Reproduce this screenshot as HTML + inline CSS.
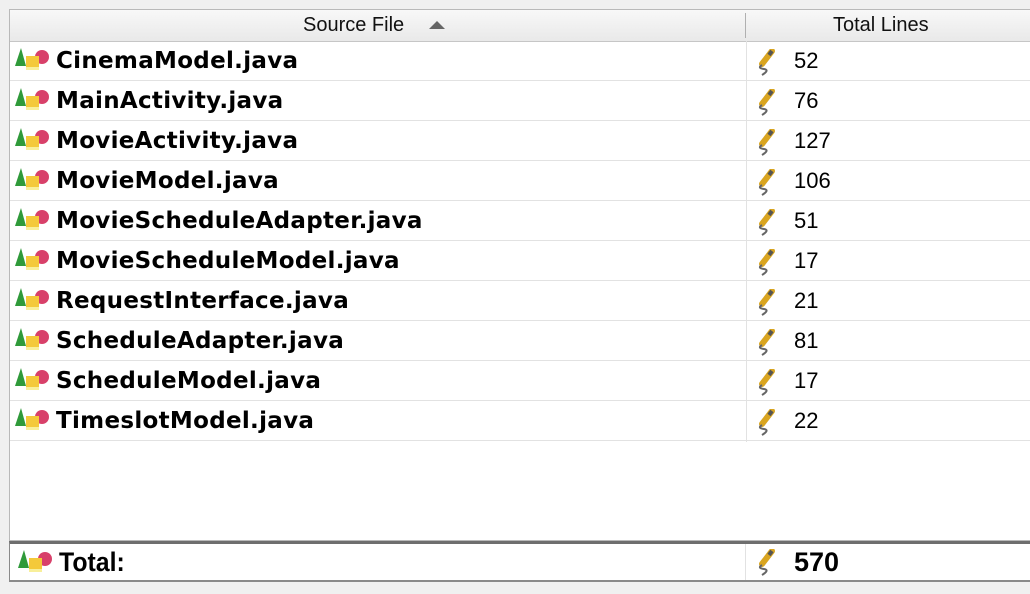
<!DOCTYPE html>
<html><head><style>
body{margin:0;width:1030px;height:594px;background:#f0f0f0;position:relative;overflow:hidden;font-family:"Liberation Sans",sans-serif}
.tbl{position:absolute;left:9px;top:9px;width:1030px;height:532px;background:#fff;border:1px solid #b9b9b9;box-sizing:border-box}
.hdr{position:absolute;left:0;top:0;width:100%;height:31px;background:linear-gradient(#f8f8f8,#e9e9e9);border-bottom:1px solid #c6c6c6;font-size:20px;color:#111}
.hdr span{position:absolute;top:4px}
.row{position:absolute;left:0;width:100%;height:40px;border-bottom:1px solid #e2e2e2;box-sizing:border-box}
.name{position:absolute;left:46px;top:7px;font-family:"DejaVu Sans",sans-serif;font-weight:bold;font-size:23px;letter-spacing:0.3px;color:#000}
.num{position:absolute;left:784px;top:7px;font-size:22px;color:#000}
.vdiv{position:absolute;left:736px;top:31px;width:1px;height:401px;background:#e2e2e2}
.ic{position:absolute;left:5px;top:7px}
.pc{position:absolute;left:746px;top:8px}
.tot{position:absolute;left:9px;top:541px;width:1030px;height:41px;background:#fff;border-top:3px solid #6e6e6e;border-bottom:2px solid #8a8a8a;border-left:1px solid #8a8a8a;box-sizing:border-box}
</style></head><body>
<svg width="0" height="0" style="position:absolute"><defs>
<g id="ico"><polygon points="6,0 0,18 11,18" fill="#2f9a3a"/><circle cx="27" cy="9" r="7" fill="#d8406a"/><rect x="11" y="8" width="13" height="14" fill="#f4c93a"/><rect x="11" y="19" width="13" height="3" fill="#f8ef9a"/></g>
<g id="pen"><path d="M16 2 L6 15" stroke="#d9a520" stroke-width="6" stroke-linecap="round"/><path d="M16 2 L13 6" stroke="#555" stroke-width="4"/><path d="M6 16 Q1 19 8 20 Q14 21 6 26" stroke="#666" stroke-width="2" fill="none"/></g>
</defs></svg>
<div class="tbl">
<div class="hdr"><span style="left:293px">Source File</span><svg style="position:absolute;left:419px;top:10px" width="16" height="10"><polygon points="8,1 16,9 0,9" fill="#666"/></svg><div style="position:absolute;left:735px;top:3px;width:1px;height:25px;background:#b0b0b0"></div><span style="left:823px">Total Lines</span></div>
<div class="vdiv"></div>
<div class="row" style="top:31px"><svg class="ic" width="42" height="26"><use href="#ico"/></svg><span class="name">CinemaModel.java</span><svg class="pc" width="20" height="28"><use href="#pen"/></svg><span class="num">52</span></div>
<div class="row" style="top:71px"><svg class="ic" width="42" height="26"><use href="#ico"/></svg><span class="name">MainActivity.java</span><svg class="pc" width="20" height="28"><use href="#pen"/></svg><span class="num">76</span></div>
<div class="row" style="top:111px"><svg class="ic" width="42" height="26"><use href="#ico"/></svg><span class="name">MovieActivity.java</span><svg class="pc" width="20" height="28"><use href="#pen"/></svg><span class="num">127</span></div>
<div class="row" style="top:151px"><svg class="ic" width="42" height="26"><use href="#ico"/></svg><span class="name">MovieModel.java</span><svg class="pc" width="20" height="28"><use href="#pen"/></svg><span class="num">106</span></div>
<div class="row" style="top:191px"><svg class="ic" width="42" height="26"><use href="#ico"/></svg><span class="name">MovieScheduleAdapter.java</span><svg class="pc" width="20" height="28"><use href="#pen"/></svg><span class="num">51</span></div>
<div class="row" style="top:231px"><svg class="ic" width="42" height="26"><use href="#ico"/></svg><span class="name">MovieScheduleModel.java</span><svg class="pc" width="20" height="28"><use href="#pen"/></svg><span class="num">17</span></div>
<div class="row" style="top:271px"><svg class="ic" width="42" height="26"><use href="#ico"/></svg><span class="name">RequestInterface.java</span><svg class="pc" width="20" height="28"><use href="#pen"/></svg><span class="num">21</span></div>
<div class="row" style="top:311px"><svg class="ic" width="42" height="26"><use href="#ico"/></svg><span class="name">ScheduleAdapter.java</span><svg class="pc" width="20" height="28"><use href="#pen"/></svg><span class="num">81</span></div>
<div class="row" style="top:351px"><svg class="ic" width="42" height="26"><use href="#ico"/></svg><span class="name">ScheduleModel.java</span><svg class="pc" width="20" height="28"><use href="#pen"/></svg><span class="num">17</span></div>
<div class="row" style="top:391px"><svg class="ic" width="42" height="26"><use href="#ico"/></svg><span class="name">TimeslotModel.java</span><svg class="pc" width="20" height="28"><use href="#pen"/></svg><span class="num">22</span></div>
</div>
<div class="tot">
<svg style="position:absolute;left:8px;top:6px" width="42" height="26"><use href="#ico"/></svg>
<span style="position:absolute;left:49px;top:3px;font-weight:bold;font-size:27px;transform:scaleX(0.92);transform-origin:left">Total:</span>
<div style="position:absolute;left:735px;top:0;width:1px;height:36px;background:#e2e2e2"></div>
<svg style="position:absolute;left:746px;top:5px" width="20" height="28"><use href="#pen"/></svg>
<span style="position:absolute;left:784px;top:3px;font-weight:bold;font-size:27px">570</span>
</div>
</body></html>
